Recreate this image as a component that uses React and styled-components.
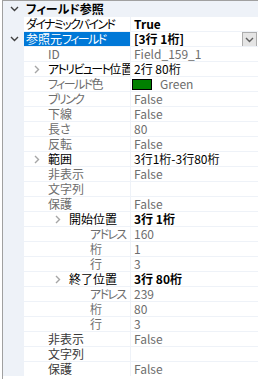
import React from 'react';
import styled, {createGlobalStyle} from 'styled-components';

const LINE = '#eef2f8';
const TONES = {gray: '#6d6d6d', black: '#000000', dark: '#3a3a3a', white: '#ffffff'};

const GlobalStyle = createGlobalStyle`
  html, body {
    margin: 0;
    padding: 0;
    background: #ffffff;
  }
  body {
    font-family: "Noto Sans CJK JP", "Noto Sans", sans-serif;
    font-size: 12px;
    font-feature-settings: "palt";
  }
`

const Frame = styled.div`
  width: 258px;
  height: 379px;
  padding-left: 2px;
  box-sizing: border-box;
  overflow: hidden;
  background: #ffffff;
`

const Grid = styled.div`
  border-top: 1px solid #a0a0a0;
  border-left: 1px solid #a0a0a0;
  height: 100%;
  box-sizing: border-box;
  display: flex;
  flex-direction: column;
`

const Row = styled.div`
  display: flex;
  height: 15px;
  flex-shrink: 0;
  background: ${p => p.$category ? LINE : '#ffffff'};
`

const Gutter = styled.div`
  width: 21px;
  flex-shrink: 0;
  background: ${LINE};
  display: flex;
  align-items: center;
  justify-content: center;
  padding-left: 1px;
  box-sizing: border-box;
`

const Cells = styled.div`
  flex: 1;
  display: flex;
  border-top: 1px solid ${LINE};
  min-width: 0;
`

const NameCell = styled.div`
  width: ${p => p.$wide ? 'auto' : '106px'};
  flex: ${p => p.$wide ? '1' : '0 0 auto'};
  display: flex;
  align-items: center;
  padding-left: ${p => p.$indent}px;
  box-sizing: border-box;
  background: ${p => p.$selected ? '#0078d7' : 'transparent'};
  color: ${p => TONES[p.$tone]};
  font-weight: ${p => p.$bold ? 700 : 400};
  line-height: 14px;
  white-space: nowrap;
  overflow: hidden;
`

// MS UI Gothic draws katakana narrower than Noto does, so kana runs are pulled tighter
const Kana = styled.span`
  letter-spacing: ${p => p.$bold ? '0' : '-1.6px'};
`

const ArrowSlot = styled.span`
  width: 21px;
  flex-shrink: 0;
  display: flex;
  align-items: center;
  padding-left: 7px;
  box-sizing: border-box;
`

const ValueCell = styled.div`
  flex: 1;
  display: flex;
  align-items: center;
  border-left: 1px solid ${LINE};
  padding-left: 3px;
  color: ${p => TONES[p.$tone]};
  font-weight: ${p => p.$bold ? 700 : 400};
  line-height: 14px;
  white-space: nowrap;
  min-width: 0;
`

const Swatch = styled.span`
  width: 20px;
  height: 11px;
  box-sizing: border-box;
  border: 1px solid #000000;
  background: ${p => p.$color};
  margin-left: -2px;
  margin-right: 8px;
  flex-shrink: 0;
`

const DropButton = styled.span`
  margin-left: auto;
  margin-right: 1px;
  width: 15px;
  height: 15px;
  box-sizing: border-box;
  border: 1px solid #adadad;
  background: #e5e5e5;
  display: flex;
  align-items: center;
  justify-content: center;
  align-self: flex-start;
`

const Chevron = ({color = '#404040'}) => (
  <svg width="9" height="6" viewBox="0 0 9 6">
    <path d="M1 1 L4.5 4.5 L8 1" stroke={color} strokeWidth="1.4" fill="none" />
  </svg>
);

const Caret = () => (
  <svg width="6" height="9" viewBox="0 0 6 9">
    <path d="M1 1 L4.5 4.5 L1 8" stroke="#a6a6a6" strokeWidth="1.4" fill="none" />
  </svg>
);

function JpText({text, bold}) {
  return text.split(/([\u30A0-\u30FF]+)/).map((part, i) =>
    /[\u30A0-\u30FF]/.test(part) ? <Kana key={i} $bold={bold}>{part}</Kana> : part
  );
}

const rows = [
  {name: 'フィールド参照', category: true, open: true},
  {name: 'ダイナミックバインド', tone: 'black', value: 'True', valueTone: 'black', valueBold: true},
  {name: '参照元フィールド', selected: true, open: true, value: '[3行 1桁]', valueTone: 'black', valueBold: true, dropdown: true},
  {name: 'ID', depth: 1, value: 'Field_159_1'},
  {name: 'アトリビュート位置', depth: 1, arrow: true, tone: 'black', value: '2行 80桁', valueTone: 'black'},
  {name: 'フィールド色', depth: 1, value: 'Green', swatch: '#008000'},
  {name: 'ブリンク', depth: 1, value: 'False'},
  {name: '下線', depth: 1, value: 'False'},
  {name: '長さ', depth: 1, value: '80'},
  {name: '反転', depth: 1, value: 'False'},
  {name: '範囲', depth: 1, arrow: true, tone: 'black', value: '3行1桁-3行80桁', valueTone: 'black'},
  {name: '非表示', depth: 1, value: 'False'},
  {name: '文字列', depth: 1, value: ''},
  {name: '保護', depth: 1, value: 'False'},
  {name: '開始位置', depth: 2, arrow: true, tone: 'black', value: '3行 1桁', valueTone: 'black', valueBold: true},
  {name: 'アドレス', depth: 3, value: '160'},
  {name: '桁', depth: 3, value: '1'},
  {name: '行', depth: 3, value: '3'},
  {name: '終了位置', depth: 2, arrow: true, tone: 'black', value: '3行 80桁', valueTone: 'black', valueBold: true},
  {name: 'アドレス', depth: 3, value: '239'},
  {name: '桁', depth: 3, value: '80'},
  {name: '行', depth: 3, value: '3'},
  {name: '非表示', depth: 1, tone: 'dark', value: 'False'},
  {name: '文字列', depth: 1, tone: 'dark', value: ''},
  {name: '保護', depth: 1, tone: 'dark', value: 'False'},
];

function PropertyRow({row}) {
  const depth = row.depth || 0;
  const tone = row.selected ? 'white' : (row.tone || (row.category ? 'black' : 'gray'));

  return (
    <Row $category={row.category}>
      <Gutter>{row.open && <Chevron />}</Gutter>
      <Cells>
        <NameCell
          $wide={row.category}
          $indent={depth === 0 ? 2 : 3 + (depth - 1) * 21}
          $selected={row.selected}
          $tone={tone}
          $bold={row.category}
        >
          {depth > 0 && <ArrowSlot>{row.arrow && <Caret />}</ArrowSlot>}
          <span><JpText text={row.name} bold={row.category} /></span>
        </NameCell>
        {!row.category && (
          <ValueCell $tone={row.valueTone || 'gray'} $bold={row.valueBold}>
            {row.swatch && <Swatch $color={row.swatch} />}
            {row.value}
            {row.dropdown && <DropButton><Chevron color="#606060" /></DropButton>}
          </ValueCell>
        )}
      </Cells>
    </Row>
  );
}

export default function App() {
  return (
    <>
      <GlobalStyle />
      <Frame>
        <Grid>
          {rows.map((row, i) => <PropertyRow key={i} row={row} />)}
        </Grid>
      </Frame>
    </>
  );
}
